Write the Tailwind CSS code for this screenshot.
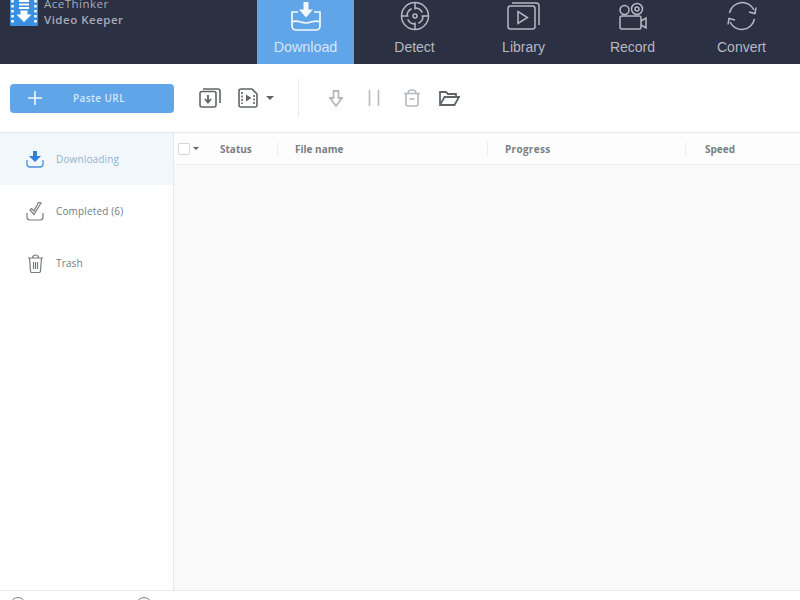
<!DOCTYPE html>
<html lang="en">
<head>
    <meta charset="UTF-8">
    <title>AceThinker Video Keeper</title>
    <script src="https://cdn.jsdelivr.net/npm/@tailwindcss/browser@4"></script>
</head>
<body class="w-[800px] h-[600px] overflow-hidden bg-white flex flex-col font-['Liberation_Sans',sans-serif]">
    <!-- Top nav -->
    <header class="h-[64px] shrink-0 bg-[#2b3043] flex overflow-hidden">
        <div class="w-[257px] shrink-0 flex items-start pl-[10px] gap-[6px] -mt-[3px]">
            <svg class="w-[28px] h-[29px] shrink-0" viewBox="0 0 28 29">
                <rect width="28" height="29" rx="1" fill="#3a8fe0"/>
                <path d="M2.500 3v23M25.500 3v23" stroke="#fff" stroke-width="2.500" stroke-dasharray="2.500 2.500"/>
                <path d="M9 4h10M9 7.500h10M9 11h10" stroke="#fff" stroke-width="2"/>
                <path d="M10.500 13.500h7v4h4L14 25l-7.500-7.500h4z" fill="#fff"/>
            </svg>
            <div class="text-[11.500px] leading-[16px] tracking-[0.5px] text-[#a9acb6] font-['Open_Sans',sans-serif] -mt-[1px]">
                <div>AceThinker</div>
                <div class="font-semibold">Video Keeper</div>
            </div>
        </div>
        <nav class="flex">
            <a class="w-[97px] mr-[6px] bg-[#5fa5e8] flex flex-col items-center text-[#d5e7f9] text-[14.300px]">
                <svg class="w-[30px] h-[30px] mt-[1px]" viewBox="0 0 30 30" fill="none" stroke="#f4f8fd" stroke-width="1.700">
                    <path d="M12.500 1h5v7.500h4.500L15 16.500 8 8.500h4.500z" fill="#f4f8fd" stroke="none"/>
                    <path d="M7 11H1v14a4 4 0 0 0 4 4h20a4 4 0 0 0 4-4V11h-6"/>
                    <path d="M1 21c5-3 8 1 14 1s9-4 14-1"/>
                </svg>
                <span class="mt-[8px] leading-[17px]">Download</span>
            </a>
            <a class="w-[109px] flex flex-col items-center text-[#b6b9c2] text-[14px]">
                <svg class="w-[30px] h-[30px] mt-[1px]" viewBox="0 0 30 30" fill="none" stroke="#b6b9c2" stroke-width="1.500">
                    <circle cx="15" cy="15" r="13.500"/>
                    <circle cx="15" cy="15" r="8" stroke-dasharray="9 3.500"/>
                    <circle cx="15" cy="15" r="2"/>
                    <path d="M15 1.500v7M15 21.500v7M1.500 15h7M21.500 15h7"/>
                </svg>
                <span class="mt-[8px] leading-[17px]">Detect</span>
            </a>
            <a class="w-[109px] flex flex-col items-center text-[#b6b9c2] text-[14px]">
                <svg class="w-[33px] h-[28px] mt-[2px]" viewBox="0 0 33 28" fill="none" stroke="#b6b9c2" stroke-width="1.500">
                    <rect x="1" y="4" width="27" height="23" rx="2.500"/>
                    <path d="M5 1h24a3 3 0 0 1 3 3v19"/>
                    <path d="M11 9.500v12l9.500-6z"/>
                </svg>
                <span class="mt-[9px] leading-[17px]">Library</span>
            </a>
            <a class="w-[109px] flex flex-col items-center text-[#b6b9c2] text-[14px]">
                <svg class="w-[28px] h-[28px] mt-[2px]" viewBox="0 0 28 28" fill="none" stroke="#b6b9c2" stroke-width="1.500">
                    <circle cx="5.500" cy="8" r="4.500"/>
                    <circle cx="18" cy="7" r="5.500"/>
                    <circle cx="18" cy="7" r="2"/>
                    <rect x="1" y="14" width="21" height="13" rx="2"/>
                    <path d="M22 19l5-3v10l-5-3"/>
                </svg>
                <span class="mt-[9px] leading-[17px]">Record</span>
            </a>
            <a class="w-[109px] flex flex-col items-center text-[#b6b9c2] text-[14px]">
                <svg class="w-[32px] h-[30px] mt-[1px]" viewBox="0 0 32 30" fill="none" stroke="#b6b9c2" stroke-width="1.500">
                    <path d="M3.500 12A13 13 0 0 1 28 9"/>
                    <path d="M23 11l6 1.500 1-6"/>
                    <path d="M28.500 18A13 13 0 0 1 4 21"/>
                    <path d="M9 19l-6-1.500-1 6"/>
                </svg>
                <span class="mt-[8px] leading-[17px]">Convert</span>
            </a>
        </nav>
    </header>

    <!-- Toolbar -->
    <div class="h-[69px] shrink-0 border-b border-[#e6e8ea] flex items-center pl-[10px]">
        <button class="w-[164px] h-[29px] rounded-[4px] bg-[#5fa5e8] flex items-center text-[#d5e7f9] text-[10px] tracking-[0.4px] font-['Open_Sans',sans-serif] font-semibold">
            <svg class="w-[16px] h-[16px] ml-[17px]" viewBox="0 0 16 16" stroke="#f4f8fd" stroke-width="1.600"><path d="M8 1v14M1 8h14"/></svg>
            <span class="ml-[30px]">Paste URL</span>
        </button>
        <svg class="w-[22px] h-[20px] ml-[25px]" viewBox="0 0 22 20" fill="none" stroke="#5f6569" stroke-width="1.600">
            <rect x="1" y="3.500" width="16" height="15.500" rx="2"/>
            <path d="M4 1h15a2 2 0 0 1 2 2v12"/>
            <path d="M9 7v6.500M6 11l3 3.500 3-3.500" stroke-width="1.800"/>
        </svg>
        <svg class="w-[20px] h-[20px] ml-[17px]" viewBox="0 0 20 20" fill="none" stroke="#5f6569" stroke-width="1.600">
            <path d="M3 1h11l5 5v11a2 2 0 0 1-2 2H3a2 2 0 0 1-2-2V3a2 2 0 0 1 2-2z"/>
            <path d="M8 6.500v7l5.500-3.500z" fill="#5f6569" stroke="none"/>
            <path d="M4 4v12M16 7v9" stroke-dasharray="2 1.500"/>
        </svg>
        <span class="ml-[8px] w-0 h-0 border-x-[4px] border-x-transparent border-t-[4px] border-t-[#5f6569]"></span>
        <span class="ml-[24px] w-px h-[38px] bg-[#e8eaec]"></span>
        <svg class="w-[14px] h-[17px] ml-[30px]" viewBox="0 0 14 17" fill="none" stroke="#b5b9bc" stroke-width="1.800">
            <path d="M4.500 1h5v7H13l-6 8-6-8h3.500z"/>
        </svg>
        <svg class="w-[12px] h-[16px] ml-[25px]" viewBox="0 0 12 16" stroke="#b5b9bc" stroke-width="1.600"><path d="M1.500 0v16M10.500 0v16"/></svg>
        <svg class="w-[18px] h-[18px] ml-[23px]" viewBox="0 0 18 18" fill="none" stroke="#b5b9bc" stroke-width="1.600">
            <path d="M1 4.500h16M5 4.500C5 2 6.500 1 9 1s4 1 4 3.500"/>
            <path d="M3 4.500V15a2 2 0 0 0 2 2h8a2 2 0 0 0 2-2V4.500"/>
            <path d="M6.500 10h5"/>
        </svg>
        <svg class="w-[21px] h-[16px] ml-[18px]" viewBox="0 0 21 16" fill="none" stroke="#5f6569" stroke-width="1.800">
            <path d="M1 14V2h6l2 2h8v3"/>
            <path d="M1 15h14.500L20 7H5.500z"/>
        </svg>
    </div>

    <!-- Main -->
    <div class="flex-1 flex min-h-0 border-b border-[#e8eaec]">
        <aside class="w-[174px] shrink-0 border-r border-[#e6e8ea] text-[10px] tracking-[0.15px] font-['Open_Sans',sans-serif]">
            <div class="h-[52px] bg-[#f2f7fb] flex items-center pl-[26px] gap-[12px] text-[#8fb3d3]">
                <svg class="w-[18px] h-[17px]" viewBox="0 0 18 17" fill="none" stroke="#4a90d9" stroke-width="1.300">
                    <path d="M7 0h4v5h4l-6 6-6-6h4z" fill="#2f80d8" stroke="none"/>
                    <path d="M1 9v4a3 3 0 0 0 3 3h10a3 3 0 0 0 3-3V9"/>
                </svg>
                <span>Downloading</span>
            </div>
            <div class="h-[52px] flex items-center pl-[26px] gap-[12px] text-[#767b7f]">
                <svg class="w-[18px] h-[19px]" viewBox="0 0 18 19" fill="none" stroke="#787d81" stroke-width="1.200">
                    <path d="M4 8l4 4.500L15 1l-2.500-.500L8 9 5.500 6.500z"/>
                    <path d="M1 11v4a3 3 0 0 0 3 3h10a3 3 0 0 0 3-3v-4"/>
                </svg>
                <span>Completed (6)</span>
            </div>
            <div class="h-[52px] flex items-center pl-[27px] gap-[12px] text-[#767b7f]">
                <svg class="w-[17px] h-[19px]" viewBox="0 0 17 19" fill="none" stroke="#787d81" stroke-width="1.200">
                    <path d="M1 4h15M5.500 4c0-2 1.500-3 3-3s3 1 3 3"/>
                    <path d="M2.500 4l1 13a1.500 1.500 0 0 0 1.500 1.500h7a1.500 1.500 0 0 0 1.500-1.500l1-13"/>
                    <path d="M6.500 8v7M8.500 8v7M10.500 8v7"/>
                </svg>
                <span>Trash</span>
            </div>
        </aside>
        <section class="flex-1 bg-[#f9f9f9] flex flex-col">
            <div class="h-[32px] shrink-0 bg-[#fdfdfd] border-b border-[#f0f1f2] flex items-center text-[10px] font-bold text-[#7a7f84] font-['Open_Sans',sans-serif]">
                <span class="ml-[4px] w-[12px] h-[12px] bg-white border border-[#d5d7d9] rounded-[1px]"></span>
                <span class="ml-[3px] w-0 h-0 border-x-[3px] border-x-transparent border-t-[3px] border-t-[#5f6569]"></span>
                <span class="ml-[21px] w-[57px] pt-[2px]">Status</span>
                <span class="w-px h-[14px] bg-[#eceef0]"></span>
                <span class="ml-[17px] w-[192px] pt-[2px]">File name</span>
                <span class="w-px h-[14px] bg-[#eceef0]"></span>
                <span class="ml-[17px] w-[180px] pt-[2px] tracking-[0.3px]">Progress</span>
                <span class="w-px h-[14px] bg-[#eceef0]"></span>
                <span class="ml-[19px] pt-[2px]">Speed</span>
            </div>
        </section>
    </div>

    <!-- Status bar, cut off by the window -->
    <footer class="h-[9px] shrink-0 overflow-hidden relative bg-white">
        <span class="absolute left-[10px] top-[6px] w-[16px] h-[16px] rounded-full border border-[#7d8184]"></span>
        <span class="absolute left-[136px] top-[6px] w-[16px] h-[16px] rounded-full border border-[#7d8184]"></span>
    </footer>
</body>
</html>
